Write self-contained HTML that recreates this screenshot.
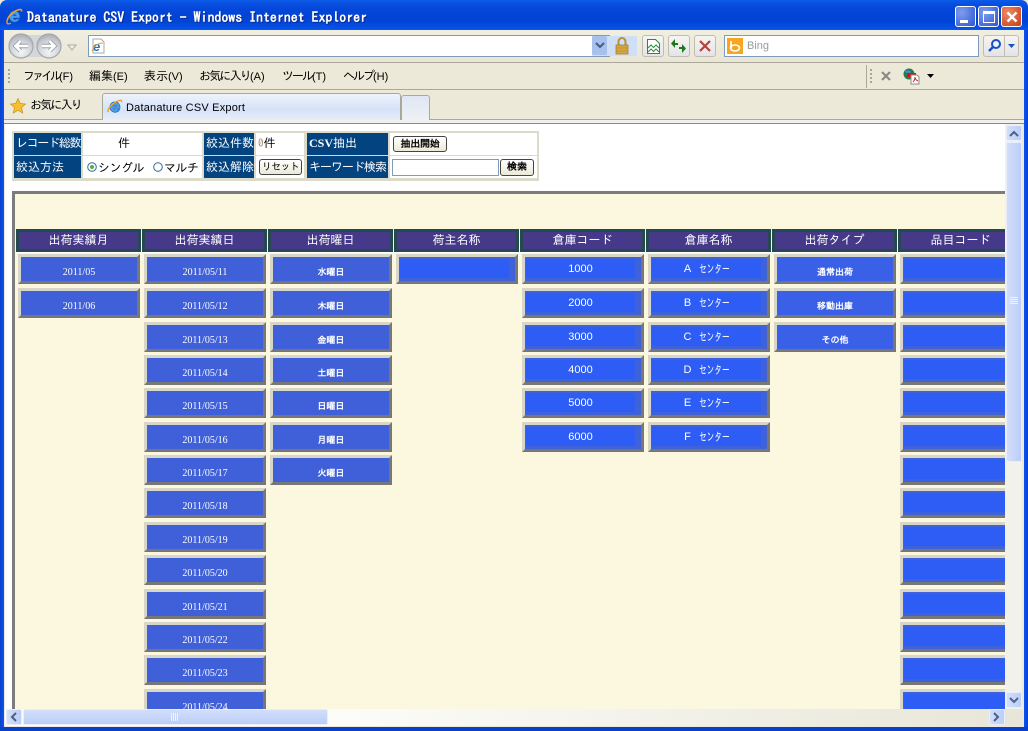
<!DOCTYPE html>
<html lang="ja"><head><meta charset="utf-8"><title>Datanature CSV Export - Windows Internet Explorer</title>
<style>
html,body{margin:0;padding:0;width:1028px;height:731px;overflow:hidden;background:#ece9d8}
body{position:relative;font-family:"IPAGothic","Liberation Sans","Noto Sans CJK JP",sans-serif;font-size:12px;color:#000}
.a,.a *{box-sizing:border-box}
.a{position:absolute}
svg{position:absolute;overflow:visible}
#title{left:0;top:0;width:1028px;height:30px;background:linear-gradient(#0a5ce8 0,#0a4fe0 4px,#0346d8 10px,#0244d4 22px,#0552e8 28px,#0a58ee 30px);border-radius:7px 7px 0 0}
.t{position:absolute;white-space:nowrap}
.tb{border:1px solid #fff;border-radius:3px}
.sep{left:4px;width:1020px;height:1px;background:#aca899}
.h{position:absolute;top:229px;width:125px;height:23px;border:3px solid #25494f;background:#46398a;color:#fff;text-align:center;line-height:17px;font-size:12px}
.hl{position:absolute;top:252px;width:125px;height:1px;background:#fff}
.b{position:absolute;width:122px;height:30px;border-style:solid;border-width:3px;border-color:#d8d6c8 #777 #777 #d8d6c8;background:#3f60d8;color:#fff;text-align:center;overflow:hidden}
.d{font:10px/10px "Liberation Serif",serif;padding-top:11px}
.j{font-size:9px;line-height:10px;padding-top:11px;font-weight:bold}
.c{background:#3f62d8}
.c i{position:absolute;left:1px;top:2px;right:6px;bottom:3px;background:#2d5df5;font:11px/20px "Liberation Sans",sans-serif;color:#fff;text-align:center;white-space:nowrap}
.c u{display:inline-block;width:30px;margin-left:8px;text-decoration:none;font:12px/20px "IPAGothic",sans-serif;text-align:left;transform:scaleX(.64);transform-origin:0 50%;vertical-align:top}
.l{position:absolute;background:#03437f;color:#fff;height:22px;line-height:21px;white-space:nowrap;padding-left:2px}
.r2{line-height:23px}
.w{position:absolute;background:#fff;height:22px}
.pb{position:absolute;background:linear-gradient(#fff,#ece9d8);border:1px solid #444;border-radius:3px;font-size:10px;line-height:14px;text-align:center;color:#000;height:16px;font-weight:bold}
.sb{background:linear-gradient(90deg,#d2defa,#bccdf8);border:1px solid #e8eefc;border-radius:2px}
.tool{border:1px solid #c0bdb0;border-radius:3px;background:linear-gradient(#f6f5f0,#e4e3ea);height:22px;top:35px}
.m{top:70px;font-family:"Liberation Sans","IPAGothic",sans-serif;font-size:11px;line-height:12px}
.m span{font-family:"IPAGothic",sans-serif;font-size:12px}
</style></head><body>

<!-- window frame -->
<div class="a" id="title"></div>
<div class="a" style="left:0;top:30px;width:4px;height:701px;background:linear-gradient(90deg,#0a3fd0,#0a55f0)"></div>
<div class="a" style="right:0;top:30px;width:4px;height:701px;background:linear-gradient(90deg,#0a55f0,#0a3fd0)"></div>
<div class="a" style="left:0;top:727px;width:1028px;height:4px;background:#0a40c8"></div>

<!-- title -->
<svg style="left:6px;top:8px" width="17" height="17" viewBox="0 0 17 17"><path d="M8.5 3a5.5 5.5 0 0 0-5.4 6.6C4 13 7 14.6 9.500 14c2-.4 3.400-1.500 4-3h-3c-.6.900-2.800.900-3.300-1h6.600C14.300 6 12 3 8.500 3zM7.200 7.600c.4-1.500 2.400-1.500 2.900 0z" fill="#4a9be8" stroke="#1b5fb0" stroke-width=".6"/><path d="M1 14C1 9 7 3 13.500 1.500c1.500-.4 2.500.5 2 2" fill="none" stroke="#f0a020" stroke-width="1.500"/><path d="M1 14c-.5 2 1.500 2.500 4 1" fill="none" stroke="#f0a020" stroke-width="1.300"/></svg>
<div class="t" style="left:27px;top:9px;font-size:14px;line-height:16px;font-weight:bold;color:#fff;text-shadow:1px 1px 0 #0a2a90;letter-spacing:-.06px">Datanature CSV Export - Windows Internet Explorer</div>

<!-- window buttons -->
<div class="a tb" style="left:955px;top:6px;width:21px;height:21px;background:radial-gradient(circle at 30% 30%,#7f9df0,#2c55d0)"><div class="a" style="left:4px;top:13px;width:8px;height:3px;background:#fff"></div></div>
<div class="a tb" style="left:978px;top:6px;width:21px;height:21px;background:radial-gradient(circle at 30% 30%,#7f9df0,#2c55d0)"><div class="a" style="left:4px;top:4px;width:12px;height:12px;border:1px solid #fff;border-top-width:3px"></div></div>
<div class="a tb" style="left:1001px;top:6px;width:21px;height:21px;background:radial-gradient(circle at 30% 30%,#ec8a68,#c83c14)"><svg style="left:4px;top:4px" width="12" height="12"><path d="M1.500 1.500l9 9M10.500 1.500l-9 9" stroke="#fff" stroke-width="2.400"/></svg></div>

<!-- address bar -->
<div class="a" style="left:4px;top:30px;width:1020px;height:32px;background:linear-gradient(#f0eee0,#e9e6d6)"></div>
<div class="a sep" style="top:62px"></div>
<svg style="left:8px;top:32px" width="70" height="28" viewBox="0 0 70 28">
<defs><radialGradient id="o" cx=".5" cy=".75" r=".75"><stop offset="0" stop-color="#f4f6f8"/><stop offset=".6" stop-color="#cfd3d8"/><stop offset="1" stop-color="#a9adb3"/></radialGradient></defs>
<rect x="9" y="3" width="30" height="22" fill="#d4d6d8"/>
<circle cx="13" cy="14" r="12" fill="url(#o)" stroke="#a4a8ac" stroke-width="1.200"/>
<circle cx="41" cy="14" r="12" fill="url(#o)" stroke="#a4a8ac" stroke-width="1.200"/>
<path d="M20 14H8M12.500 9l-5 5 5 5" fill="none" stroke="#9ea2a8" stroke-width="4.400"/>
<path d="M34 14h12M41.500 9l5 5-5 5" fill="none" stroke="#9ea2a8" stroke-width="4.400"/>
<path d="M20 14H8M12.500 9l-5 5 5 5" fill="none" stroke="#fff" stroke-width="2.600"/>
<path d="M34 14h12M41.500 9l5 5-5 5" fill="none" stroke="#fff" stroke-width="2.600"/>
<path d="M60 13h8l-4 5z" fill="#f4f2e8" stroke="#a8a8a0"/></svg>
<div class="a" style="left:88px;top:35px;width:522px;height:22px;background:#fff;border:1px solid #7f9db9"></div>
<svg style="left:91px;top:38px" width="15" height="16" viewBox="0 0 15 16"><path d="M2 1h8l3 3v11H2z" fill="#fff" stroke="#a8a8a8"/><text x="2" y="13" font-family="Liberation Sans" font-size="13" font-weight="bold" font-style="italic" fill="#1a6fc8">e</text><path d="M1 13C3 8 7 5 12 5" fill="none" stroke="#f0a020" stroke-width="1"/></svg>
<div class="a" style="left:592px;top:36px;width:45px;height:20px;background:#cfdff7"></div>
<div class="a" style="left:592px;top:36px;width:15px;height:19px;background:#a8c0ee;border-radius:2px"></div>
<svg style="left:595px;top:42px" width="10" height="8"><path d="M1 1l4 4 4-4" fill="none" stroke="#445a80" stroke-width="2"/></svg>
<svg style="left:615px;top:37px" width="14" height="18" viewBox="0 0 14 18"><path d="M3.500 8V4.500a3.500 3.500 0 0 1 7 0V8" fill="none" stroke="#b89030" stroke-width="2"/><rect x="1" y="8" width="12" height="9" fill="#d8a840" stroke="#a07820" stroke-width=".7"/><path d="M1 11h12M1 14h12" stroke="#b88828" stroke-width=".8"/></svg>
<div class="a tool" style="left:642px;width:22px"></div>
<svg style="left:647px;top:39px" width="13" height="15" viewBox="0 0 13 15"><path d="M.5.500h8l4 4v10H.5z" fill="#fff" stroke="#2a8a3a"/><path d="M1 9l3-3 2.500 2.500L9 6l3 3M1 13l3-3 2.500 2.500L9 10l3 3" fill="none" stroke="#2a8a3a"/></svg>
<div class="a tool" style="left:668px;width:22px"></div>
<svg style="left:671px;top:39px" width="16" height="14" viewBox="0 0 16 14"><path d="M7 5H4V1L0 5.500 4 10V7h3z" fill="#1a7a1a" transform="translate(0 -1)"/><path d="M9 9h3v4l4-4.500L12 4v3H9z" fill="#1a7a1a" transform="translate(-1 1)"/></svg>
<div class="a tool" style="left:694px;width:22px"></div>
<svg style="left:699px;top:40px" width="12" height="12"><path d="M1 1l10 10M11 1L1 11" stroke="#b84038" stroke-width="2.200"/></svg>
<div class="a" style="left:724px;top:35px;width:255px;height:22px;background:#fff;border:1px solid #7f9db9"></div>
<div class="a" style="left:727px;top:38px;width:16px;height:16px;background:#f5a623"></div>
<svg style="left:727px;top:38px" width="16" height="16"><path d="M4 3v8" stroke="#fff" stroke-width="1.600"/><ellipse cx="8" cy="10" rx="4.500" ry="3" fill="none" stroke="#fff" stroke-width="1.600"/></svg>
<div class="t" style="left:747px;top:40px;font:11px/13px 'Liberation Sans',sans-serif;color:#999">Bing</div>
<div class="a tool" style="left:983px;width:36px"></div>
<div class="a" style="left:1004px;top:36px;width:1px;height:20px;background:#c0bdb0"></div>
<svg style="left:987px;top:38px" width="15" height="15"><circle cx="9" cy="6" r="4" fill="#eef3ff" stroke="#1a50c0" stroke-width="2"/><path d="M6 9l-4 4" stroke="#1a50c0" stroke-width="2.400"/></svg>
<svg style="left:1007px;top:44px" width="9" height="5"><path d="M1 0h7L4.500 4z" fill="#1a50c0"/></svg>

<!-- menu bar -->
<div class="a" style="left:4px;top:63px;width:1020px;height:26px;background:#ece9d8"></div>
<div class="a sep" style="top:89px"></div>
<svg style="left:8px;top:68px" width="3" height="18"><path d="M1 1v16" stroke="#a8a698" stroke-width="2" stroke-dasharray="2 2"/></svg>
<div class="t m" style="left:23px"><span style="letter-spacing:-3px">ファイル</span>(F)</div>
<div class="t m" style="left:89px"><span>編集</span>(E)</div>
<div class="t m" style="left:144px"><span>表示</span>(V)</div>
<div class="t m" style="left:199px"><span style="letter-spacing:-1.800px">お気に入り</span>(A)</div>
<div class="t m" style="left:282px"><span style="letter-spacing:-2px">ツール</span>(T)</div>
<div class="t m" style="left:343px"><span style="letter-spacing:-2px">ヘルプ</span>(H)</div>
<div class="a" style="left:866px;top:65px;width:1px;height:23px;background:#aca899"></div>
<svg style="left:870px;top:68px" width="3" height="18"><path d="M1 1v16" stroke="#a8a698" stroke-width="2" stroke-dasharray="2 2"/></svg>
<svg style="left:881px;top:71px" width="10" height="10"><path d="M1 1l8 8M9 1L1 9" stroke="#8a8a84" stroke-width="2.200"/></svg>
<svg style="left:902px;top:68px" width="18" height="17"><circle cx="7" cy="6" r="5.500" fill="#2a7a50"/><path d="M3 3c2-1 5-1 6 1l-3 3z" fill="#3a90d8"/><rect x="5" y="5" width="9" height="4" fill="#e01010"/><path d="M9 7h6l2 2v7H9z" fill="#fff" stroke="#908888"/><path d="M11 14c1-1 2-3 2-5 0 2 1 3 3 4" fill="none" stroke="#d02020"/></svg>
<svg style="left:927px;top:74px" width="7" height="4"><path d="M0 0h7L3.500 4z" fill="#000"/></svg>

<!-- tab bar -->
<div class="a" style="left:4px;top:90px;width:1020px;height:30px;background:#ece9d8"></div>
<div class="a" style="left:4px;top:119px;width:1020px;height:1px;background:#a0a8b4"></div>
<div class="a" style="left:4px;top:120px;width:1020px;height:4px;background:#f0f0ee"></div>
<div class="a" style="left:4px;top:123px;width:1020px;height:1px;background:#8a8a80"></div>
<svg style="left:10px;top:98px" width="16" height="16"><path d="M8 .5l2.200 5 5.300.5-4 3.500 1.200 5.500L8 12.200 3.300 15l1.200-5.500-4-3.500 5.300-.5z" fill="#f8c030" stroke="#c89020" stroke-width=".7"/></svg>
<div class="t" style="left:30px;top:99px;letter-spacing:-1.800px">お気に入り</div>
<div class="a" style="left:102px;top:93px;width:299px;height:27px;background:linear-gradient(#eef3fb,#d4e2f8 60%,#e8eef8);border:1px solid #a8a898;border-radius:3px 3px 0 0;border-bottom:0"></div>
<svg style="left:107px;top:99px" width="16" height="16" viewBox="0 0 17 17"><path d="M8.500 3a5.500 5.500 0 0 0-5.400 6.600C4 13 7 14.600 9.500 14c2-.4 3.400-1.500 4-3h-3c-.6.900-2.800.900-3.300-1h6.600C14.300 6 12 3 8.500 3zM7.200 7.600c.4-1.500 2.400-1.500 2.900 0z" fill="#4a9be8" stroke="#1b5fb0" stroke-width=".6"/><path d="M1 14C1 9 7 3 13.500 1.500c1.500-.4 2.500.5 2 2" fill="none" stroke="#f0a020" stroke-width="1.500"/></svg>
<div class="t" style="left:126px;top:101px;font:11px/14px 'Liberation Sans',sans-serif;letter-spacing:.2px">Datanature CSV Export</div>
<div class="a" style="left:401px;top:95px;width:29px;height:25px;background:linear-gradient(#dfe7f4,#eef1f4);border:1px solid #a8a8a8;border-radius:3px 3px 0 0;border-bottom:0"></div>

<!-- page viewport -->
<div class="a" style="left:5px;top:124px;width:1000px;height:585px;background:#fff;overflow:hidden">
<div class="a" style="left:-5px;top:-124px;width:1005px;height:709px">

<!-- control table -->
<div class="a" style="left:12px;top:131px;width:527px;height:50px;background:#dcdac8"></div>
<div class="l" style="left:14px;top:133px;width:67px;letter-spacing:-1.300px">レコード総数</div>
<div class="w" style="left:83px;top:133px;width:119px;text-align:left;padding-left:35px;line-height:21px">件</div>
<div class="l" style="left:204px;top:133px;width:50px">絞込件数</div>
<div class="w" style="left:256px;top:133px;width:48px;line-height:21px;padding-left:2px"><span style="font-size:11px;color:#a86">0</span>件</div>
<div class="l" style="left:307px;top:133px;width:81px"><b style="font-family:'Liberation Serif',serif;font-size:12px">CSV</b>抽出</div>
<div class="w" style="left:390px;top:133px;width:147px"></div>
<div class="pb" style="left:393px;top:136px;width:54px;letter-spacing:-.2px">抽出開始</div>

<div class="l r2" style="left:14px;top:156px;width:67px">絞込方法</div>
<div class="w" style="left:83px;top:156px;width:119px"></div>
<svg style="left:87px;top:162px" width="10" height="10"><circle cx="5" cy="5" r="4.300" fill="#fff" stroke="#3a6a9a"/><circle cx="5" cy="5" r="2" fill="#50b050"/></svg>
<div class="t" style="left:98px;top:162px;letter-spacing:-.5px">シングル</div>
<svg style="left:153px;top:162px" width="10" height="10"><circle cx="5" cy="5" r="4.300" fill="#fff" stroke="#3a6a9a"/></svg>
<div class="t" style="left:164px;top:162px;letter-spacing:-.6px">マルチ</div>
<div class="l r2" style="left:204px;top:156px;width:50px">絞込解除</div>
<div class="w" style="left:256px;top:156px;width:48px"></div>
<div class="pb" style="left:259px;top:159px;width:43px;letter-spacing:-.6px;font-weight:normal">リセット</div>
<div class="l r2" style="left:307px;top:156px;width:81px;letter-spacing:-1px">キーワード検索</div>
<div class="w" style="left:390px;top:156px;width:147px"></div>
<div class="a" style="left:392px;top:159px;width:107px;height:17px;background:#fff;border:1px solid #7f9db9"></div>
<div class="pb" style="left:500px;top:159px;width:34px;height:17px">検索</div>

<!-- frame -->
<div class="a" style="left:12px;top:191px;width:993px;height:518px;border:3px solid #7c7c7c;border-right:0;border-bottom:0;background:#fcf8e0"></div>

<!-- headers -->
<div class="h" style="left:16px">出荷実績月</div><div class="hl" style="left:16px"></div>
<div class="h" style="left:142px">出荷実績日</div><div class="hl" style="left:142px"></div>
<div class="h" style="left:268px">出荷曜日</div><div class="hl" style="left:268px"></div>
<div class="h" style="left:394px">荷主名称</div><div class="hl" style="left:394px"></div>
<div class="h" style="left:520px">倉庫コード</div><div class="hl" style="left:520px"></div>
<div class="h" style="left:646px">倉庫名称</div><div class="hl" style="left:646px"></div>
<div class="h" style="left:772px">出荷タイプ</div><div class="hl" style="left:772px"></div>
<div class="h" style="left:898px">品目コード</div><div class="hl" style="left:898px"></div>

<!-- col 1 -->
<div class="b d" style="left:18px;top:254px">2011/05</div>
<div class="b d" style="left:18px;top:288px">2011/06</div>
<!-- col 2 -->
<div class="b d" style="left:144px;top:254px">2011/05/11</div>
<div class="b d" style="left:144px;top:288px">2011/05/12</div>
<div class="b d" style="left:144px;top:322px">2011/05/13</div>
<div class="b d" style="left:144px;top:355px">2011/05/14</div>
<div class="b d" style="left:144px;top:388px">2011/05/15</div>
<div class="b d" style="left:144px;top:422px">2011/05/16</div>
<div class="b d" style="left:144px;top:455px">2011/05/17</div>
<div class="b d" style="left:144px;top:488px">2011/05/18</div>
<div class="b d" style="left:144px;top:522px">2011/05/19</div>
<div class="b d" style="left:144px;top:555px">2011/05/20</div>
<div class="b d" style="left:144px;top:589px">2011/05/21</div>
<div class="b d" style="left:144px;top:622px">2011/05/22</div>
<div class="b d" style="left:144px;top:655px">2011/05/23</div>
<div class="b d" style="left:144px;top:689px">2011/05/24</div>
<!-- col 3 -->
<div class="b j" style="left:270px;top:254px">水曜日</div>
<div class="b j" style="left:270px;top:288px">木曜日</div>
<div class="b j" style="left:270px;top:322px">金曜日</div>
<div class="b j" style="left:270px;top:355px">土曜日</div>
<div class="b j" style="left:270px;top:388px">日曜日</div>
<div class="b j" style="left:270px;top:422px">月曜日</div>
<div class="b j" style="left:270px;top:455px">火曜日</div>
<!-- col 4 -->
<div class="b c" style="left:396px;top:254px"><i></i></div>
<!-- col 5 -->
<div class="b c" style="left:522px;top:254px"><i>1000</i></div>
<div class="b c" style="left:522px;top:288px"><i>2000</i></div>
<div class="b c" style="left:522px;top:322px"><i>3000</i></div>
<div class="b c" style="left:522px;top:355px"><i>4000</i></div>
<div class="b c" style="left:522px;top:388px"><i>5000</i></div>
<div class="b c" style="left:522px;top:422px"><i>6000</i></div>
<!-- col 6 -->
<div class="b c" style="left:648px;top:254px"><i>A<u>センター</u></i></div>
<div class="b c" style="left:648px;top:288px"><i>B<u>センター</u></i></div>
<div class="b c" style="left:648px;top:322px"><i>C<u>センター</u></i></div>
<div class="b c" style="left:648px;top:355px"><i>D<u>センター</u></i></div>
<div class="b c" style="left:648px;top:388px"><i>E<u>センター</u></i></div>
<div class="b c" style="left:648px;top:422px"><i>F<u>センター</u></i></div>
<!-- col 7 -->
<div class="b j" style="left:774px;top:254px;background:#3a60e8">通常出荷</div>
<div class="b j" style="left:774px;top:288px;background:#3a60e8">移動出庫</div>
<div class="b j" style="left:774px;top:322px;background:#3a60e8">その他</div>
<!-- col 8 -->
<div class="b c" style="left:900px;top:254px"><i></i></div>
<div class="b c" style="left:900px;top:288px"><i></i></div>
<div class="b c" style="left:900px;top:322px"><i></i></div>
<div class="b c" style="left:900px;top:355px"><i></i></div>
<div class="b c" style="left:900px;top:388px"><i></i></div>
<div class="b c" style="left:900px;top:422px"><i></i></div>
<div class="b c" style="left:900px;top:455px"><i></i></div>
<div class="b c" style="left:900px;top:488px"><i></i></div>
<div class="b c" style="left:900px;top:522px"><i></i></div>
<div class="b c" style="left:900px;top:555px"><i></i></div>
<div class="b c" style="left:900px;top:589px"><i></i></div>
<div class="b c" style="left:900px;top:622px"><i></i></div>
<div class="b c" style="left:900px;top:655px"><i></i></div>
<div class="b c" style="left:900px;top:689px"><i></i></div>
</div></div>

<!-- vertical scrollbar -->
<div class="a" style="left:1005px;top:124px;width:17px;height:585px;background:#f2f1ea"></div>
<div class="a sb" style="left:1006px;top:125px;width:16px;height:16px"></div>
<svg style="left:1009px;top:130px" width="10" height="7"><path d="M1 6l4-4 4 4" fill="none" stroke="#4d6185" stroke-width="2"/></svg>
<div class="a sb" style="left:1006px;top:142px;width:16px;height:320px"></div>
<svg style="left:1010px;top:297px" width="8" height="8"><path d="M0 .5h8M0 2.500h8M0 4.500h8M0 6.500h8" stroke="#eef3ff"/></svg>
<div class="a sb" style="left:1006px;top:692px;width:16px;height:16px"></div>
<svg style="left:1009px;top:697px" width="10" height="7"><path d="M1 1l4 4 4-4" fill="none" stroke="#4d6185" stroke-width="2"/></svg>

<!-- horizontal scrollbar -->
<div class="a" style="left:5px;top:709px;width:1017px;height:17px;background:linear-gradient(90deg,#fdfdfa 30%,#e8e6d8)"></div>
<div class="a sb" style="left:6px;top:709px;width:16px;height:16px"></div>
<svg style="left:10px;top:712px" width="7" height="10"><path d="M6 1L2 5l4 4" fill="none" stroke="#4d6185" stroke-width="2"/></svg>
<div class="a sb" style="left:23px;top:709px;width:305px;height:16px;background:linear-gradient(#d2defa,#bccdf8)"></div>
<svg style="left:171px;top:713px" width="8" height="8"><path d="M.5 0v8M2.500 0v8M4.500 0v8M6.500 0v8" stroke="#eef3ff"/></svg>
<div class="a sb" style="left:989px;top:709px;width:16px;height:16px"></div>
<svg style="left:993px;top:712px" width="7" height="10"><path d="M1 1l4 4-4 4" fill="none" stroke="#4d6185" stroke-width="2"/></svg>

</body></html>
